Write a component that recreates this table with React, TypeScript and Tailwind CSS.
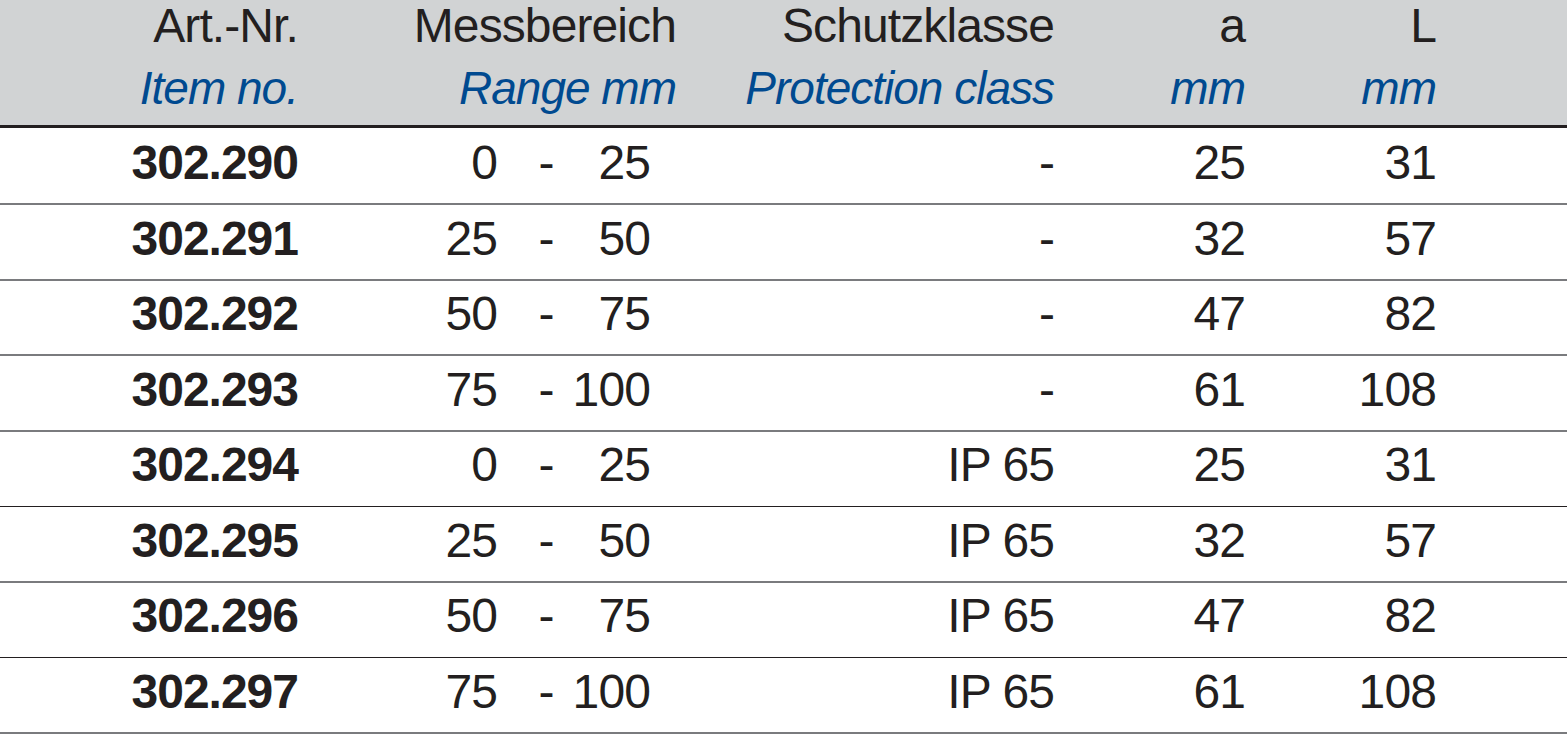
const rows = [
  { nr: "302.290", from: "0", to: "25", ip: "-", a: "25", l: "31", dark: false },
  { nr: "302.291", from: "25", to: "50", ip: "-", a: "32", l: "57", dark: false },
  { nr: "302.292", from: "50", to: "75", ip: "-", a: "47", l: "82", dark: false },
  { nr: "302.293", from: "75", to: "100", ip: "-", a: "61", l: "108", dark: false },
  { nr: "302.294", from: "0", to: "25", ip: "IP 65", a: "25", l: "31", dark: true },
  { nr: "302.295", from: "25", to: "50", ip: "IP 65", a: "32", l: "57", dark: false },
  { nr: "302.296", from: "50", to: "75", ip: "IP 65", a: "47", l: "82", dark: true },
  { nr: "302.297", from: "75", to: "100", ip: "IP 65", a: "61", l: "108", dark: false },
]

export default function App() {
  return (
    <div
      className="w-[1567px] h-[739px] overflow-hidden bg-white text-[#231f20]"
      style={{ fontFamily: '"Liberation Sans", Arial, sans-serif' }}
    >
      {/* Header */}
      <div className="h-[128px] bg-[#d1d3d4] border-b-[3px] border-[#231f20] mb-[1.5px]">
        <div className="flex pt-[2px] text-[48px] leading-none tracking-[-0.9px]">
          <div className="w-[298px] text-right">Art.-Nr.</div>
          <div className="w-[378px] text-right">Messbereich</div>
          <div className="w-[378px] text-right">Schutzklasse</div>
          <div className="w-[191px] text-right">a</div>
          <div className="w-[191px] text-right">L</div>
        </div>
        <div className="flex mt-[14.5px] text-[46px] leading-none italic tracking-[-1px] text-[#004a90]">
          <div className="w-[298px] text-right">Item no.</div>
          <div className="w-[378px] text-right">Range mm</div>
          <div className="w-[378px] text-right">Protection class</div>
          <div className="w-[191px] text-right">mm</div>
          <div className="w-[191px] text-right">mm</div>
        </div>
      </div>

      {/* Rows */}
      {rows.map((r) => (
        <div
          key={r.nr}
          className={
            r.dark
              ? "flex h-[75.5px] pt-[9.5px] border-b-[1.5px] border-[#231f20] text-[48px] leading-none tracking-[-0.9px]"
              : "flex h-[75.5px] pt-[9.5px] border-b-2 border-[#7a7b7e] text-[48px] leading-none tracking-[-0.9px]"
          }
        >
          <div className="w-[298px] text-right font-bold tracking-[-1px]">{r.nr}</div>
          <div className="w-[378px] flex">
            <span className="w-[199px] text-right">{r.from}</span>
            <span className="ml-[41px] w-[16px] text-center">-</span>
            <span className="w-[96px] text-right">{r.to}</span>
          </div>
          <div className="w-[378px] text-right">{r.ip}</div>
          <div className="w-[191px] text-right">{r.a}</div>
          <div className="w-[191px] text-right">{r.l}</div>
        </div>
      ))}
    </div>
  )
}
